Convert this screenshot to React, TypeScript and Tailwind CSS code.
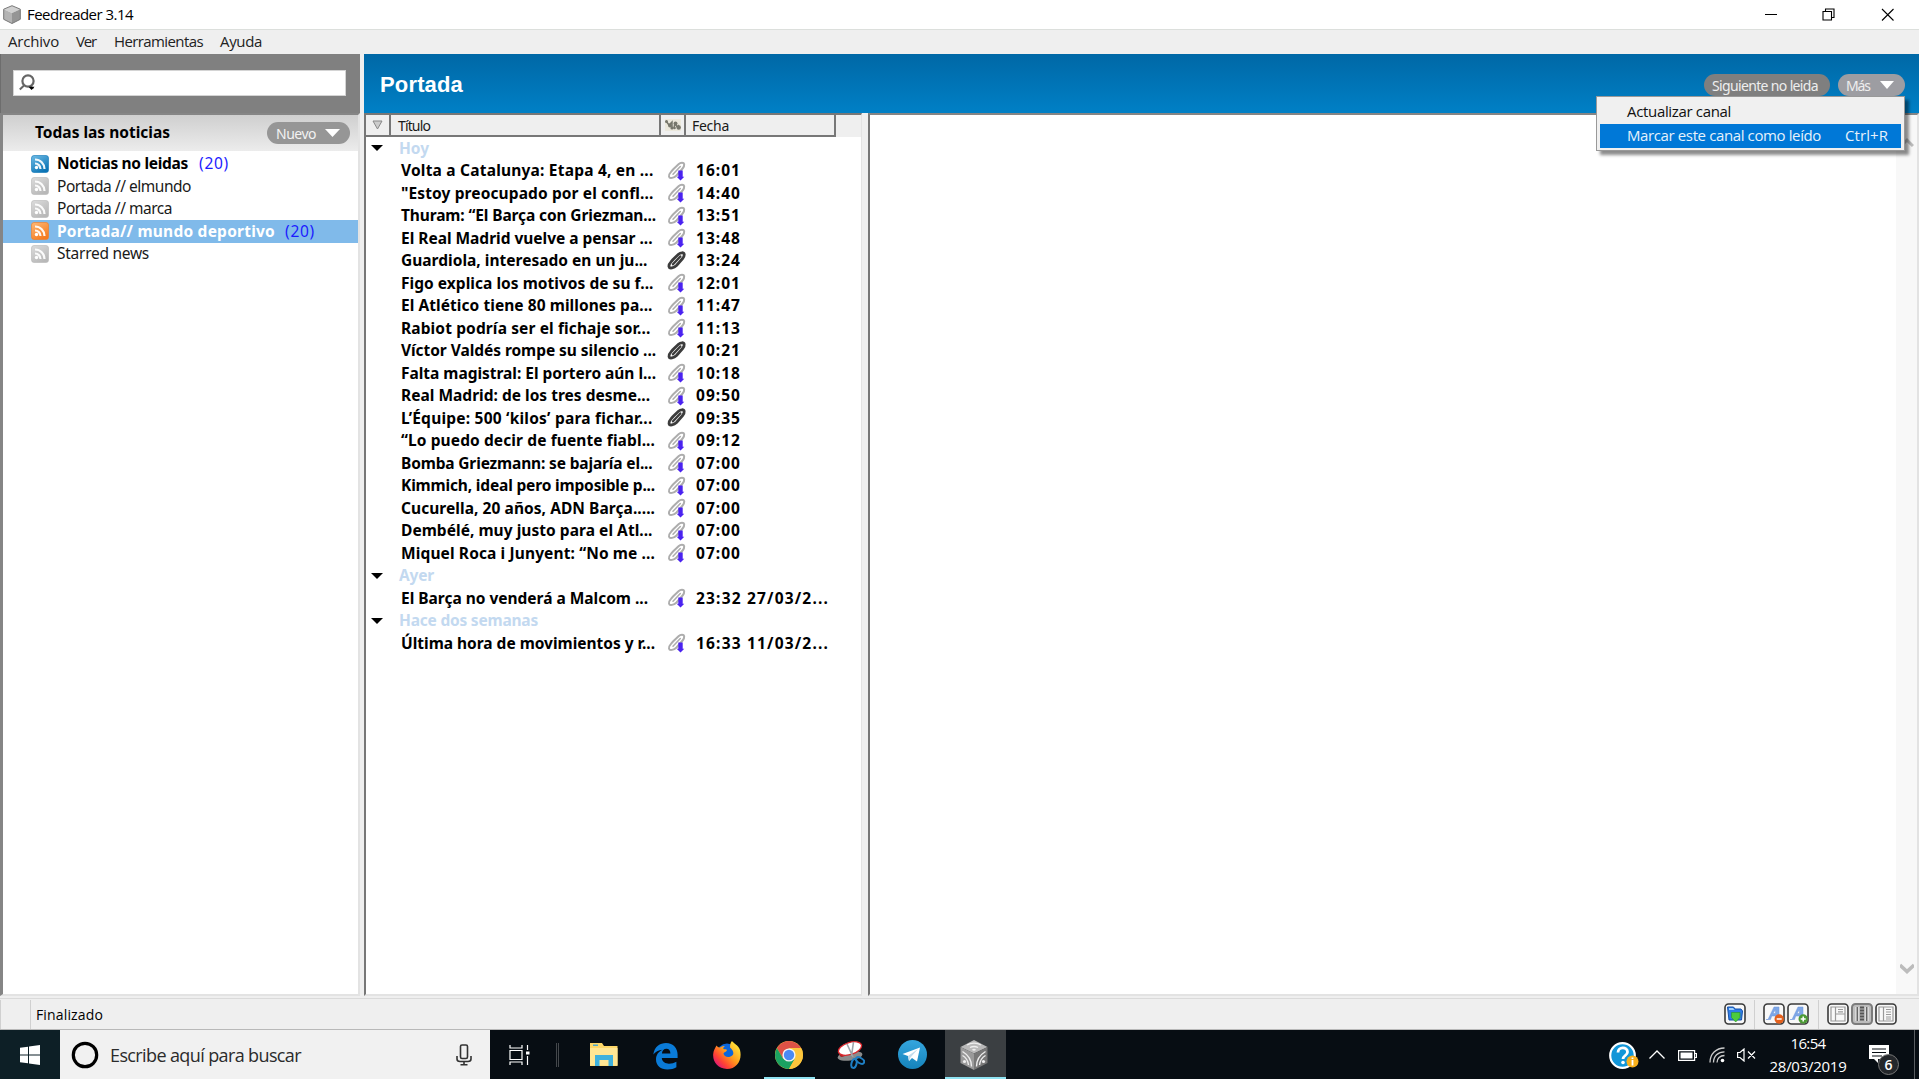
import React, { useLayoutEffect, useRef, useState } from "react";

const TAHOMA = "font-['Noto_Sans','DejaVu_Sans',sans-serif]";
const SEGOE = "font-['Open_Sans','Noto_Sans',sans-serif]";

/* A single line of text whose tracking is adjusted to span w pixels. */
function Fit({ w, children, className = "" }: { w: number; children: string; className?: string }) {
  const ref = useRef<HTMLSpanElement>(null);
  const [ls, setLs] = useState(0);
  useLayoutEffect(() => {
    if (ref.current) setLs((w - ref.current.getBoundingClientRect().width) / children.length);
  }, []);
  return (
    <span ref={ref} className={`inline-block shrink-0 whitespace-pre ${className}`} style={{ letterSpacing: ls }}>
      {children}
    </span>
  );
}

function Rss({ kind }: { kind: "blue" | "gray" | "orange" }) {
  const c = { blue: ["#6fbce6", "#0b74b5"], gray: ["#dcdcdc", "#b8b8b8"], orange: ["#ffb977", "#f57c20"] }[kind];
  return (
    <svg width="18" height="18" viewBox="0 0 18 18" className="shrink-0">
      <defs>
        <linearGradient id={"rss" + kind} x1="0" y1="0" x2="0.6" y2="1">
          <stop offset="0" stopColor={c[0]} />
          <stop offset="1" stopColor={c[1]} />
        </linearGradient>
      </defs>
      <rect x="0.5" y="0.5" width="17" height="17" rx="2.5" fill={`url(#rss${kind})`} stroke={c[1]} strokeOpacity="0.6" />
      <g fill="none" stroke="#fff" strokeWidth="2.2" strokeOpacity=".92">
        <path d="M4 8.500a5.500 5.500 0 0 1 5.500 5.500M4 4.500a9.500 9.500 0 0 1 9.500 9.500" />
      </g>
      <circle cx="5.500" cy="12.500" r="1.700" fill="#fff" />
    </svg>
  );
}

function Clip({ dark }: { dark?: boolean }) {
  return (
    <svg width="20" height="20" viewBox="0 0 20 20" className="shrink-0">
      <g fill="none" stroke={dark ? "#3c3c3c" : "#adadad"} strokeLinecap="round">
        <path strokeWidth={dark ? 2.8 : 2} d="M6 8.500L11.500 3.200C13.500 1.400 16.800 1.200 17.200 3.200c.2 1.600-.5 3-1.600 4.300L9.500 14.500C7 17 2.500 18 2 15.600c-.3-1.600.7-3.300 2-4.700z" />
        <path strokeWidth={dark ? 2.4 : 1.5} d="M6 13.300L13.300 5.500" />
      </g>
      {!dark && <path d="M11.300 9.500h4.400v6.300h1.600L13.500 19.500l-3.800-3.700h1.600z" fill="#4a22f0" />}
    </svg>
  );
}

type Row = [string, number, string, boolean?];
const today: Row[] = [
  ["Volta a Catalunya: Etapa 4, en ...", 653, "16:01"],
  ["\"Estoy preocupado por el confl...", 653, "14:40"],
  ["Thuram: “El Barça con Griezman...", 655.5, "13:51"],
  ["El Real Madrid vuelve a pensar ...", 652, "13:48"],
  ["Guardiola, interesado en un ju...", 647, "13:24", true],
  ["Figo explica los motivos de su f...", 653, "12:01"],
  ["El Atlético tiene 80 millones pa...", 652, "11:47"],
  ["Rabiot podría ser el fichaje sor...", 650, "11:13"],
  ["Víctor Valdés rompe su silencio ...", 655.5, "10:21", true],
  ["Falta magistral: El portero aún l...", 655.5, "10:18"],
  ["Real Madrid: de los tres desme...", 649.5, "09:50"],
  ["L’Équipe: 500 ‘kilos’ para fichar...", 652, "09:35", true],
  ["“Lo puedo decir de fuente fiabl...", 654.5, "09:12"],
  ["Bomba Griezmann: se bajaría el...", 652, "07:00"],
  ["Kimmich, ideal pero imposible p...", 654.5, "07:00"],
  ["Cucurella, 20 años, ADN Barça.....", 654.5, "07:00"],
  ["Dembélé, muy justo para el Atl...", 652, "07:00"],
  ["Miquel Roca i Junyent: “No me ...", 654.5, "07:00"],
];
const yesterday: Row[] = [["El Barça no venderá a Malcom ...", 647.5, "23:32 27/03/2..."]];
const older: Row[] = [["Última hora de movimientos y r...", 654.5, "16:33 11/03/2..."]];

function Group({ name, w, rows }: { name: string; w: number; rows: Row[] }) {
  return (
    <div className="text-[15.5px] font-bold text-black">
      <div className="flex h-[22.5px] items-center pl-[5px] text-[#c3d9f0]">
        <svg width="12" height="6" viewBox="0 0 12 6" className="mr-[16px] shrink-0">
          <path d="M0 0h12L6 6z" fill="#000" />
        </svg>
        <Fit w={w}>{name}</Fit>
      </div>
      {rows.map((r) => (
        <div key={r[0]} className="flex h-[22.5px] items-center">
          <div className="w-[301px] shrink-0 pl-[35px]">
            <Fit w={r[1] - 400.5}>{r[0]}</Fit>
          </div>
          <Clip dark={r[3]} />
          <div className="ml-[9px] flex">
            <Fit w={r[2].length > 6 ? 133 : 45}>{r[2]}</Fit>
          </div>
        </div>
      ))}
    </div>
  );
}

function TitleBar() {
  return (
    <div className={`flex h-[29px] shrink-0 items-center bg-white pl-[3px] text-[15px] text-black ${SEGOE}`}>
      <svg width="18" height="19" viewBox="0 0 18 19">
        <path d="M9 .7L17.300 4.200 9 8 .7 4.200z" fill="#d0d0d0" />
        <path d="M.7 4.200L9 8v10.500L.7 14.300z" fill="#b4b4b4" />
        <path d="M17.300 4.200L9 8v10.500l8.300-4.200z" fill="#959595" />
        <path d="M9 .7l8.300 3.500v10.100L9 18.500.7 14.300V4.200z" fill="none" stroke="#777" />
      </svg>
      <Fit w={106} className="ml-[6px]">Feedreader 3.14</Fit>
      <svg width="134" height="14" viewBox="0 0 134 14" className="mr-[20px] ml-auto" fill="none" stroke="#000" strokeWidth="1.1">
        <path d="M0 6.500h12M58 3.500h8.500v8.500H58zM60.500 3.500V1H69v8.500h-2.500" />
        <path d="M117 1l11.500 11.500M128.500 1L117 12.500" />
      </svg>
    </div>
  );
}

function Sidebar() {
  const items: [string, number, "blue" | "gray" | "orange", number?][] = [
    ["Noticias no leidas", 131, "blue", 11],
    ["Portada // elmundo", 134, "gray"],
    ["Portada // marca", 115, "gray"],
    ["Portada// mundo deportivo", 218, "orange", 10],
    ["Starred news", 92, "gray"],
  ];
  return (
    <div className="flex w-[360px] shrink-0 flex-col">
      <div className="h-[59px] shrink-0 border-l border-[#6d6d6d] bg-[#808080] pt-4 pl-3">
        <div className="flex h-[26px] w-[333px] items-center border border-[#d4d4d4] bg-white pl-[5px]">
          <svg width="18" height="18" viewBox="0 0 18 18" fill="none">
            <circle cx="9" cy="7" r="5.600" stroke="#666" strokeWidth="2.200" />
            <path d="M5 11.500L.800 15.500M11.500 12.500l3 2" stroke="#666" strokeWidth="2" />
            <path d="M9.500 12.800h6l-3 3.200z" fill="#000" />
          </svg>
        </div>
      </div>
      <div className="flex grow flex-col border-t-2 border-r-2 border-b-2 border-l-[3px] border-t-[#858585] border-r-[#e3e3e3] border-b-[#e3e3e3] border-l-[#858585] bg-white">
        <div className="flex h-[36px] shrink-0 items-center bg-linear-to-b from-[#cfcfcf] to-[#ececec] pl-[32px] text-[15.5px] font-bold text-black">
          <Fit w={135}>Todas las noticias</Fit>
          <div className="ml-auto mr-[8px] flex h-[22px] w-[83px] items-center rounded-full bg-[#969696] pl-[9px] text-[14px] font-normal text-[#f2f2f2]">
            <Fit w={40}>Nuevo</Fit>
            <svg width="15" height="8" viewBox="0 0 15 8" className="ml-[9px]">
              <path d="M0 0h15L7.500 8z" fill="#fff" />
            </svg>
          </div>
        </div>
        <div className="pt-[1.5px]">
          {items.map(([t, w, k, gap]) => (
            <div key={t} className={`flex h-[22.5px] items-center pl-[28px] text-[15.5px] ${k === "orange" ? "bg-[#80baea] font-bold text-white" : k === "blue" ? "font-bold text-black" : "text-[#1a1a1a]"}`}>
              <Rss kind={k} />
              <Fit w={w} className="ml-[8px]">{t}</Fit>
              {gap && (
                <span className="font-normal text-[#1c1cff]" style={{ marginLeft: gap }}>
                  <Fit w={30}>(20)</Fit>
                </span>
              )}
            </div>
          ))}
        </div>
      </div>
    </div>
  );
}

function ColHead({ cls, children }: { cls: string; children?: React.ReactNode }) {
  return (
    <div className={`flex h-[22px] shrink-0 items-center border-r-2 border-b-2 border-[#777] bg-[#efefef] ${cls}`}>
      {children}
    </div>
  );
}

function Articles() {
  return (
    <div className="flex w-[498px] shrink-0 flex-col border-t-2 border-r border-b-2 border-l-2 border-t-[#777] border-r-[#e3e3e3] border-b-[#e3e3e3] border-l-[#777] bg-white">
      <div className="flex h-[22px] shrink-0 bg-[#efefef] text-[14px] text-[#1a1a1a]">
        <ColHead cls="w-[25px] justify-center">
          <svg width="11" height="10" viewBox="0 0 11 10">
            <path d="M1 1h9L5.500 9z" fill="#ccc" stroke="#888" />
          </svg>
        </ColHead>
        <ColHead cls="w-[270px] pl-[7px]">
          <Fit w={32}>Título</Fit>
        </ColHead>
        <ColHead cls="w-[25px] justify-center">
          <svg width="16" height="12" viewBox="0 0 16 12" className="bg-[#ebe8dc]">
            <path d="M1 2l3 4M4 6l3-3v6M9 9l1-5M10 4l2 4M12 8l2-2" stroke="#77776c" strokeWidth="1.500" fill="none" />
            <g fill="#77776c">
              <circle cx="1.500" cy="2.500" r="1.500" />
              <circle cx="5" cy="6.500" r="2" />
              <circle cx="7" cy="9" r="1.600" />
              <circle cx="10.500" cy="4.500" r="2" />
              <circle cx="9.500" cy="9" r="1.300" />
              <circle cx="13.700" cy="8.500" r="2.200" />
            </g>
          </svg>
        </ColHead>
        <ColHead cls="w-[150px] pl-[6px]">
          <Fit w={37}>Fecha</Fit>
        </ColHead>
      </div>
      <div>
        <Group name="Hoy" w={30} rows={today} />
        <Group name="Ayer" w={35} rows={yesterday} />
        <Group name="Hace dos semanas" w={139} rows={older} />
      </div>
    </div>
  );
}

function Reader() {
  return (
    <div className="flex min-w-0 grow justify-end border-t-2 border-r-2 border-b-2 border-l-2 border-t-[#858585] border-r-[#e3e3e3] border-b-[#e3e3e3] border-l-[#777] bg-white">
      <div className="flex w-[21px] flex-col items-center justify-between bg-[#f8f8f8] pt-[22px] pb-[20px]">
        <svg width="14" height="11" viewBox="0 0 14 11" fill="none" stroke="#bcbcbc" strokeWidth="3">
          <path d="M1 9l6-6 6 6" />
        </svg>
        <svg width="14" height="11" viewBox="0 0 14 11" fill="none" stroke="#bcbcbc" strokeWidth="3.500">
          <path d="M0 2l7 6.500L14 2" />
        </svg>
      </div>
    </div>
  );
}

function ContextMenu() {
  return (
    <div className={`absolute top-[96px] left-[1596px] h-[55px] w-[309px] border border-[#999] bg-[#f0f0f0] pt-[3px] pr-[3px] pl-[3px] text-[15px] shadow-[4px_4px_3px_rgba(0,0,0,0.45)] ${SEGOE}`}>
      <div className="flex h-[24px] items-center pb-[2px] pl-[27px] text-[#111]">
        <Fit w={104}>Actualizar canal</Fit>
      </div>
      <div className="flex h-[24px] items-center bg-[#0078d7] pb-[2px] pl-[27px] text-[#e6f1fb]">
        <Fit w={194}>Marcar este canal como leído</Fit>
        <Fit w={43} className="ml-[24px]">Ctrl+R</Fit>
      </div>
    </div>
  );
}

function StatusIcon({ active, children }: { active?: boolean; children: React.ReactNode }) {
  return (
    <svg width="22" height="22" viewBox="0 0 22 22" className="shrink-0">
      <rect x="1" y="1" width="20" height="20" rx="3.500" fill={active ? "#bdbdbd" : "#f8f8f8"} stroke={active ? "#7c7c7c" : "#3a3a3a"} strokeWidth={active ? 2 : 1.6} />
      {children}
    </svg>
  );
}

function StatusBar() {
  return (
    <div className="flex h-[32px] shrink-0 items-center border-t border-b border-t-[#dadada] border-b-[#b8b8b8] bg-[#efefef] text-[14px] text-black">
      <div className="h-[29px] w-[31px] shrink-0 border-r border-l border-[#d0d0d0]" />
      <Fit w={67} className={`ml-[5px] ${SEGOE}`}>Finalizado</Fit>
      <div className="mr-[22px] ml-auto flex items-center">
        <StatusIcon>
          <path d="M3.500 4h6l1.500 2h6l1.500 2-1 9H5z" fill="#2f7de8" stroke="#1450a8" />
          <path d="M5 5h4l1.500 2H5z" fill="#9fd0ff" />
          <path d="M7.500 9.500h8.500v5L11.700 19 7.500 14.500z" fill="#4ccb3d" stroke="#2c9427" strokeWidth=".6" />
        </StatusIcon>
        <div className="mx-[8px] h-[29px] w-px bg-[#d0d0d0]" />
        {["minus", "plus"].map((k) => (
          <span key={k} className={k === "minus" ? "mr-[2px] flex" : "flex"}>
            <StatusIcon>
              <path d="M3 16.500h2L11 4h5v12.500h-3.500v-3.500H8.700L7.500 16.500zM10 10.500h2.500V6.500z" fill="#7ea6e6" stroke="#6a94dc" strokeWidth=".5" />
              <circle cx="16.200" cy="16" r="4.700" fill={k === "minus" ? "#e5601c" : "#4c9a35"} />
              <path d={k === "minus" ? "M13.700 16h5" : "M13.700 16h5M16.200 13.500v5"} stroke="#fff" strokeWidth="1.500" />
            </StatusIcon>
          </span>
        ))}
        <div className="mr-[8px] ml-[9px] h-[29px] w-px bg-[#d0d0d0]" />
        <div className="flex gap-[2px]">
          <StatusIcon>
            <path d="M4 4h14v14H4zM8.500 4v14M8.500 11h9.500M11 6.500h5M11 8.800h5" fill="none" stroke="#999" strokeWidth="1.200" />
          </StatusIcon>
          <StatusIcon active>
            <path d="M4 4h4v14H4zM14 4h4v14h-4z" fill="#d8d8d8" />
            <path d="M6.300 4v14M15.700 4v14" stroke="#666" strokeWidth="1.400" />
            <path d="M9 4.500h4M9 7.500h4M9 10.500h4M9 13.500h4M9 16.500h4" stroke="#555" strokeWidth="1.800" />
          </StatusIcon>
          <StatusIcon>
            <path d="M4 4h14v14H4zM8.500 4v14M11 6.500h5M11 9h5M11 11.500h5M11 14h5M11 16h5" fill="none" stroke="#999" strokeWidth="1.200" />
          </StatusIcon>
        </div>
      </div>
    </div>
  );
}

function Taskbar() {
  return (
    <div className={`flex h-[49px] shrink-0 items-center bg-[#070d13] ${SEGOE}`}>
      <div className="flex h-full w-[60px] items-center justify-center bg-[#0d1f26]">
        <svg width="20" height="20" viewBox="0 0 20 20" fill="#fff" className="mt-[1px]">
          <path d="M0 2.800L8 1.700V9.500H0zM9 1.500L20 0v9.500H9zM0 10.500h8v7.800L0 17.200zM9 10.500h11V20L9 18.500z" />
        </svg>
      </div>
      <div className="flex h-full w-[430px] shrink-0 items-center bg-[#f1f1f1] pl-[11px] text-[18px] text-[#2b2b2b]">
        <svg width="28" height="28" viewBox="0 0 28 28" className="mt-px">
          <circle cx="14" cy="14" r="11.700" fill="none" stroke="#000" strokeWidth="3.200" />
        </svg>
        <Fit w={191} className="mt-[2px] ml-[11px]">Escribe aquí para buscar</Fit>
        <svg width="16" height="22" viewBox="0 0 16 22" fill="none" stroke="#333" strokeWidth="1.600" className="mr-[18px] ml-auto">
          <rect x="4.500" y="1" width="7" height="13.500" rx="1.500" />
          <path d="M1 12v3q0 2.500 3 2.500h8q3 0 3-2.500v-3M8 17.500v3M4.500 20.800h7" />
        </svg>
      </div>
      <svg width="21" height="20" viewBox="0 0 21 20" fill="none" stroke="#fff" strokeWidth="1.200" className="ml-[19px] shrink-0">
        <path d="M1 0v3h12V0M1 5.500h12v9H1zM1 20v-3h12v3M18.500 0v5M18.500 11v9" />
        <path d="M17 6.500h3.500v3H17z" fill="#fff" stroke="none" />
      </svg>
      <div className="ml-[26px] h-[24px] w-[3px] shrink-0 border-x border-[#44484c]" />

      <svg width="28" height="24" viewBox="0 0 28 24" className="ml-[31px] shrink-0">
        <path d="M0 0h12l2 3h13.500v20H0z" fill="#fdd768" />
        <path d="M0 5h27.500v17.500H0z" fill="#ffe694" />
        <path d="M3 1.500h5v1.500H3z" fill="#4fa7c9" />
        <path d="M5 23V12h18v11h-4.500v-6h-9v6z" fill="#3fb1dd" />
      </svg>
      <svg width="25" height="28" viewBox="0 0 25 28" className="mt-[2px] ml-[35px] shrink-0">
        <path d="M.3 12.500C1.500 4.500 7 1 13 1c7.500 0 11.600 5.500 11.600 11.500V16H8.800c.3 4 3.700 5.700 7.200 5.700 2.800 0 5.200-.8 7.400-2v5.600C21 26.700 18 27.500 14.500 27.500 7.500 27.500 3 23.500 3 17.500 3 13 5.500 9.600 9.500 7.800 5.500 8 2.300 10 .3 12.500zM8.900 11.500h8.500c0-3-1.500-4.700-4-4.700s-4.200 1.900-4.500 4.700z" fill="#0a7bd8" />
      </svg>
      <svg width="28" height="28" viewBox="0 0 28 28" className="ml-[35px] shrink-0">
        <defs>
          <linearGradient id="fox" x1="0.9" y1="0.1" x2="0.1" y2="0.9">
            <stop offset="0" stopColor="#ffe93a" />
            <stop offset=".45" stopColor="#ff9a1c" />
            <stop offset=".75" stopColor="#ff4334" />
            <stop offset="1" stopColor="#d9127f" />
          </linearGradient>
        </defs>
        <circle cx="14" cy="12.500" r="10" fill="#0a66dd" />
        <path d="M3.500 4.500c1 1.500 2.300 2 3.500 2 1-.8 3-2 5-1.500-1.500 1-2 2-1.500 3 1 .5 3 0 3.500 1-.5 2-3 2-3.500 3.500.5 3 4 4.500 7 3 2-1 3.500-2 2.500-5-.5-2-2-3-3-4 0-3 .5-5 2-6.500 1 2 6.500 4 8 9C29.500 19 24 28 14 28 5 28-.5 21 .2 13 .5 9.500 2 7 3.500 4.500z" fill="url(#fox)" />
      </svg>
      <div className="ml-[23px] flex h-full w-[51px] shrink-0 items-center justify-center border-b-2 border-[#8fe3f2]">
        <svg width="28" height="28" viewBox="0 0 28 28" className="mt-[2px] mr-[2px]">
          <circle cx="14" cy="14" r="14" fill="#fdc63c" />
          <path d="M1.900 7A14 14 0 0 1 26.100 7H14L8 17.500z" fill="#de5246" />
          <path d="M1.900 7A14 14 0 0 0 14 28L20 17.500H8z" fill="#1ba261" />
          <path d="M14 28a14 14 0 0 0 12.100-21H14l6 10.500z" fill="#fdc63c" />
          <circle cx="14" cy="14" r="6.600" fill="#f4f4f4" />
          <circle cx="14" cy="14" r="5.200" fill="#4a8af4" />
        </svg>
      </div>
      <svg width="28" height="28" viewBox="0 0 28 28" className="ml-[22px] shrink-0">
        <ellipse cx="13" cy="15" rx="12.500" ry="4.500" transform="rotate(-8 13 15)" fill="#8b8b8b" />
        <path d="M2 10c0 4 1 6 3 6l9-3z" fill="#a22" />
        <ellipse cx="13" cy="7.500" rx="12" ry="6" transform="rotate(-18 13 7.500)" fill="#fff" stroke="#d9262c" strokeWidth="1.300" />
        <path d="M10 3l6 13M16.500 1l-2 14" stroke="#9da3a9" strokeWidth="1.600" />
        <g fill="none" stroke="#1e7fc4" strokeWidth="2">
          <ellipse cx="17" cy="22.500" rx="2.500" ry="4.500" transform="rotate(15 17 22.500)" />
          <ellipse cx="23" cy="19.500" rx="2.600" ry="4.600" transform="rotate(-60 23 19.500)" />
        </g>
      </svg>
      <svg width="29" height="29" viewBox="0 0 29 29" className="ml-[33px] shrink-0">
        <defs>
          <linearGradient id="tg" x1="0" y1="0" x2="0" y2="1">
            <stop offset="0" stopColor="#35a6de" />
            <stop offset="1" stopColor="#1583bb" />
          </linearGradient>
        </defs>
        <circle cx="14.500" cy="14.500" r="14.500" fill="url(#tg)" />
        <path d="M4.500 14L22 7.500l-3 14-5-3.500-3 3-1-5z" fill="#fff" />
        <path d="M10 16l10-7-7.500 8.500L11 21z" fill="#c3dcec" />
      </svg>
      <div className="ml-[18px] flex h-full w-[61px] shrink-0 items-center justify-center border-b-2 border-[#8fe3f2] bg-[#3b3f42]">
        <svg width="28" height="30" viewBox="0 0 28 30" className="mt-[2px] mr-[3px]">
          <path d="M14 0l13.500 7L14 13.500.5 7z" fill="#b9b9b9" />
          <path d="M.5 7L14 13.500V30L.5 23z" fill="#9a9a9a" />
          <path d="M27.500 7L14 13.500V30l13.500-7z" fill="#777" />
          <g fill="none" stroke="#eee" strokeWidth="1.400">
            <path d="M2.500 11.500c5 3 9 8.500 9 15M2.500 15.500c3.500 2 5.500 5.500 6 9.500M25.500 11.500c-5 3-9 8.500-9 15M25.500 15.500c-3.500 2-5.500 5.500-6 9.500M7 5c4-2.500 10-2.500 14 0M10 7.500c2.500-1.300 5.500-1.300 8 0" />
          </g>
          <circle cx="4.500" cy="21.500" r="1.600" fill="#eee" />
          <circle cx="23.500" cy="21.500" r="1.600" fill="#eee" />
          <ellipse cx="14" cy="9.800" rx="1.800" ry="1" fill="#eee" />
        </svg>
      </div>

      <div className="ml-auto flex h-full items-center text-white">
        <svg width="30" height="30" viewBox="0 0 30 30" className="mt-[4px]">
          <circle cx="13.500" cy="13.500" r="12.300" fill="#1296d8" stroke="#fff" strokeWidth="2.200" />
          <path d="M9 10.500c0-6 9.500-6 9.500-.5 0 3.500-4.500 3.500-4.500 7" fill="none" stroke="#fff" strokeWidth="2.800" />
          <circle cx="14" cy="20.500" r="1.800" fill="#fff" />
          <circle cx="23.500" cy="19.500" r="6" fill="#f9b01c" />
          <path d="M23.500 18v5.500M23.500 15.500v1.500" stroke="#fff" strokeWidth="1.800" />
        </svg>
        <svg width="16" height="9" viewBox="0 0 16 9" fill="none" stroke="#fff" strokeWidth="1.300" className="ml-[10px]">
          <path d="M.5 8.500L8 1l7.500 7.500" />
        </svg>
        <svg width="19" height="11" viewBox="0 0 19 11" className="mt-px ml-[13px]">
          <path d="M.600.600h16v9.800H.600zM17 3.500h1.500v4H17" fill="none" stroke="#fff" strokeWidth="1.200" />
          <path d="M2.500 2.500h12v6h-12z" fill="#fff" />
        </svg>
        <svg width="16" height="16" viewBox="0 0 16 16" fill="none" strokeWidth="1.300" className="mt-px ml-[12px]">
          <path d="M1 15.500C1 7 7 1 15.500 1M4.500 15.500C4.500 9 9 4.800 15.500 4.800M8 15.500c0-4 3-7 7.500-7" stroke="#ccc" />
          <circle cx="13.500" cy="13.500" r="1.800" fill="#fff" />
        </svg>
        <svg width="19" height="14" viewBox="0 0 19 14" fill="none" stroke="#fff" strokeWidth="1.200" className="ml-[12px]">
          <path d="M.600 4.500H3L7 1v12L3 9.500H.600zM11 3.500l7 7M18 3.500l-7 7" />
        </svg>
        <div className="mr-[1px] ml-[13px] flex w-[78px] flex-col items-center text-[15px] leading-[23px]">
          <Fit w={35}>16:54</Fit>
          <Fit w={77}>28/03/2019</Fit>
        </div>
        <div className="relative ml-[21px] h-full w-[46px]">
          <svg width="20" height="18" viewBox="0 0 20 18" className="absolute top-[15px] left-0">
            <path d="M0 0h20v14H9v4l-4-4H0z" fill="#fff" />
            <path d="M3 4h14M3 7.500h14M3 11h10" stroke="#070d13" strokeWidth="1.200" />
          </svg>
          <div className="absolute top-[24px] left-[9px] flex h-[21px] w-[21px] items-center justify-center rounded-full border border-[#777] bg-[#24272b] text-[14px] font-semibold">
            6
          </div>
          <div className="absolute top-0 right-0 h-full w-px bg-[#595d61]" />
        </div>
        <div className="w-[4px]" />
      </div>
    </div>
  );
}

export default function App() {
  return (
    <div className={`relative flex h-[1079px] w-[1919px] flex-col overflow-hidden bg-[#efefef] ${TAHOMA}`}>
      <TitleBar />
      <div className={`flex h-[25px] shrink-0 items-center border-t border-[#dcdfdc] pb-[2px] pl-[8px] text-[15px] text-[#222] ${SEGOE}`}>
        <Fit w={51}>Archivo</Fit>
        <Fit w={20} className="ml-[17px]">Ver</Fit>
        <Fit w={89} className="ml-[18px]">Herramientas</Fit>
        <Fit w={42} className="ml-[17px]">Ayuda</Fit>
      </div>
      <div className="mb-[2px] flex min-h-0 grow">
        <Sidebar />
        <div className="ml-[4px] flex min-w-0 grow flex-col">
          <div className="flex h-[59px] shrink-0 items-center bg-linear-to-b from-[#0068a6] to-[#0080c6] pt-[3px] pr-[14px] pl-[16px] text-white">
            <Fit w={83} className="-mt-[2px] font-['Liberation_Sans',sans-serif] text-[22px] font-bold">Portada</Fit>
            <div className="ml-auto flex h-[22px] w-[126px] items-center rounded-full bg-[#7f7f7f] pl-[8px] text-[14px] text-[#eee]">
              <Fit w={106}>Siguiente no leida</Fit>
            </div>
            <div className="ml-[8px] flex h-[22px] w-[67px] items-center rounded-full bg-[#9d9da2] pl-[8px] text-[14px] text-[#eee]">
              <Fit w={24}>Más</Fit>
              <svg width="14" height="8" viewBox="0 0 14 8" className="ml-[10px]">
                <path d="M0 0h14L7 8z" fill="#fff" />
              </svg>
            </div>
          </div>
          <div className="flex min-h-0 grow gap-[6px]">
            <Articles />
            <Reader />
          </div>
        </div>
      </div>
      <StatusBar />
      <Taskbar />
      <ContextMenu />
    </div>
  );
}
